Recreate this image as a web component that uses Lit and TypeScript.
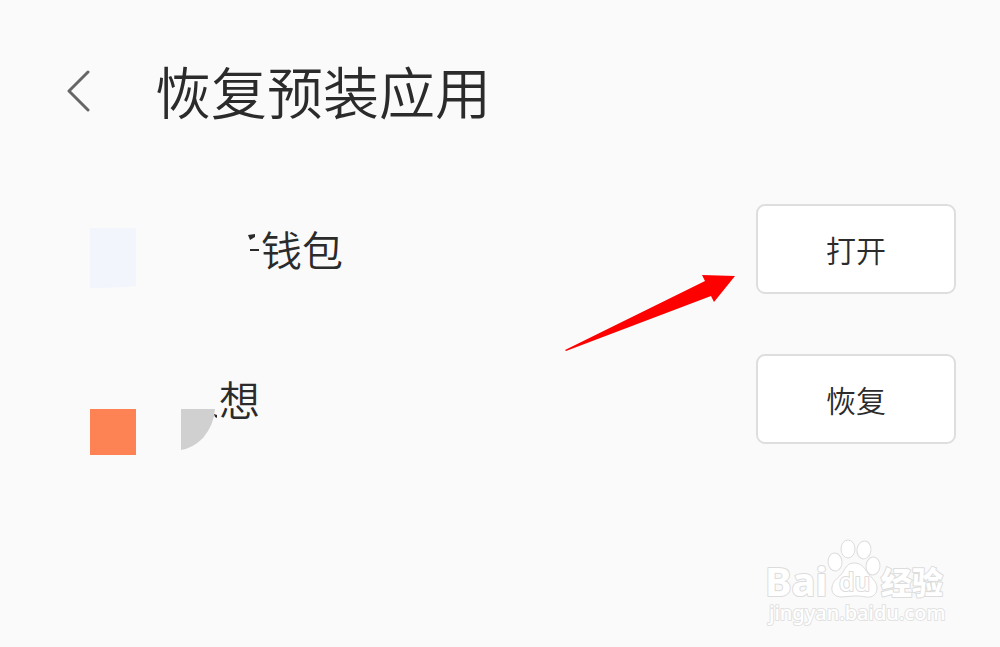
import { LitElement, html, css, svg, TemplateResult } from "lit";
import { customElement, property } from "lit/decorators.js";

@customElement("app-row")
class AppRow extends LitElement {
  @property() name = "";
  @property() action = "";

  static styles = css`
    :host {
      display: flex;
      align-items: center;
      height: 150px;
      padding: 0 44px 0 90px;
    }
    .name {
      flex: 1;
      font-size: 41px;
      line-height: 60px;
      font-weight: 350;
      padding-bottom: 2px;
    }
    .side {
      position: relative;
      display: flex;
    }
    .action {
      width: 200px;
      height: 90px;
      box-sizing: border-box;
      border: 2px solid #dedede;
      border-radius: 9px;
      background: #fff;
      color: #2b2b2b;
      font: inherit;
      font-size: 30px;
      line-height: 44px;
      font-weight: 350;
      padding: 0;
      cursor: pointer;
    }
  `;

  render() {
    return html`
      <slot name="art"></slot>
      <span class="name">${this.name}</span>
      <div class="side">
        <slot name="pointer"></slot>
        <button class="action" type="button">${this.action}</button>
      </div>
    `;
  }
}

const toes: [number, number, number, number, number][] = [
  [69, 24, 7, 9, -6],
  [82, 11, 7, 9, 0],
  [98, 12, 7, 9, 8],
  [107, 28, 7, 9, 4],
];

@customElement("app-root")
class AppRoot extends LitElement {
  static styles = css`
    :host {
      display: block;
      min-height: 100vh;
      box-sizing: border-box;
      background: #fafafa;
      color: #2b2b2b;
      font-family: "Noto Sans CJK SC", "Noto Sans", sans-serif;
    }
    .header {
      display: flex;
      align-items: center;
      gap: 63px;
      height: 174px;
      padding: 8px 66px 0;
      box-sizing: border-box;
    }
    .back {
      display: flex;
      border: 0;
      padding: 0;
      background: none;
      cursor: pointer;
    }
    .title {
      margin: 0;
      font-size: 56px;
      line-height: 80px;
      font-weight: 350;
      padding-bottom: 2px;
    }
    .art {
      display: block;
      flex: none;
    }
    .arrow {
      position: absolute;
      right: 220px;
      top: 69px;
    }
    .footer {
      display: flex;
      justify-content: flex-end;
      padding: 64px 50px 16px 0;
    }
    .mark {
      fill: #fff;
      stroke: #dcdcdc;
      stroke-width: 1;
    }
    .mark text {
      paint-order: stroke;
      stroke-width: 2;
      stroke-linejoin: round;
    }
    .latin {
      font-family: "Noto Sans", sans-serif;
      font-weight: 700;
      font-size: 40px;
    }
    .du {
      font-family: "Noto Sans", sans-serif;
      font-weight: 500;
      font-size: 25px;
    }
    .han {
      font-family: "Noto Sans CJK SC", sans-serif;
      font-weight: 900;
      font-size: 31px;
    }
    .mark .site {
      font-family: "Noto Sans", sans-serif;
      font-size: 20px;
      font-weight: 500;
      stroke: #e2e2e2;
    }
  `;

  private watermark(): TemplateResult {
    return html`
      <svg class="mark" width="184" height="92" role="img" aria-label="Baidu">
        <text class="latin" x="-1" y="58">Bai</text>
        ${toes.map(
          ([cx, cy, rx, ry, turn]) => svg`
            <ellipse cx=${cx} cy=${cy} rx=${rx} ry=${ry}
              transform="rotate(${turn} ${cx} ${cy})"></ellipse>`
        )}
        <path
          d="M88 25C95 25 98 29 101 34C105 40 111 43 111 50C111 56 107 60 100 59C95 58 92 58 88 58C84 58 80 59 76 59C69 59 65 55 66 49C67 42 73 40 77 34C80 29 82 25 88 25Z"
        />
        <text class="du" x="73" y="53">du</text>
        <text class="han" x="115" y="56">经验</text>
        <text class="site" x="3" y="82">jingyan.baidu.com</text>
      </svg>
    `;
  }

  render() {
    return html`
      <header class="header">
        <button class="back" type="button" aria-label="返回">
          <svg width="26" height="42" viewBox="0 0 26 42" fill="none"
            stroke="#666" stroke-width="3" stroke-linecap="round" stroke-linejoin="round">
            <path d="M22 2L3 21L22 40" />
          </svg>
        </button>
        <h1 class="title">恢复预装应用</h1>
      </header>
      <main>
        <app-row name="钱包" action="打开">
          <svg class="art" slot="art" width="171" height="150" aria-hidden="true">
            <path d="M0 54H46V112Q26 114 0 114Z" fill="#f3f5fc" />
            <path d="M158 61L165 60V63L160 66Z" fill="#2b2b2b" />
            <path d="M160 76H169" stroke="#2b2b2b" stroke-width="2" />
          </svg>
          <svg class="arrow" slot="pointer" width="172" height="80" aria-hidden="true">
            <path
              d="M1 77L139 9L141 8L138 2L171 3L150 29L147 23L60 56L2 78Z"
              fill="#f00"
            />
          </svg>
        </app-row>
        <app-row name="想" action="恢复">
          <svg class="art" slot="art" width="129" height="150" aria-hidden="true">
            <rect y="85" width="46" height="46" fill="#fd8254" />
            <path d="M91 85H125Q124 101 113 114Q103 124 91 126Z" fill="#d0d0d0" />
            <path d="M124 90L127 91V94L125 93Z" fill="#2b2b2b" />
          </svg>
        </app-row>
      </main>
      <footer class="footer">${this.watermark()}</footer>
    `;
  }
}
